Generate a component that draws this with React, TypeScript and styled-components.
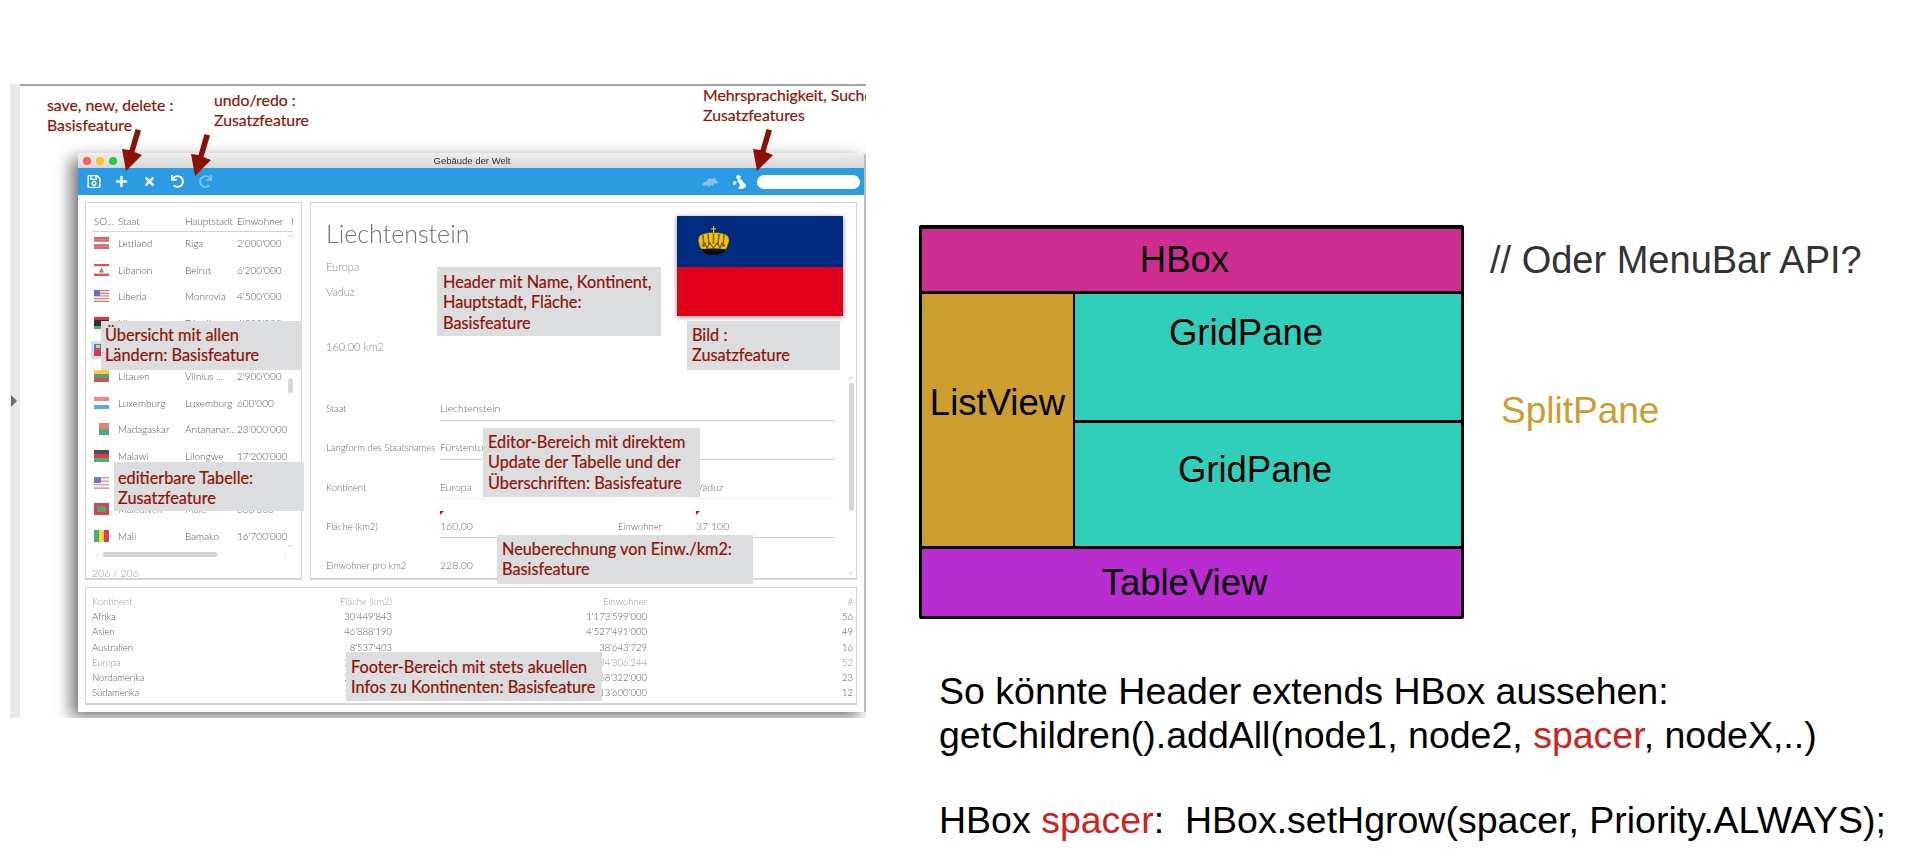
import React from "react";
import styled, { createGlobalStyle } from "styled-components";
import { FaRegSave, FaPlus, FaTimes, FaUndo, FaRedo } from "react-icons/fa";

const Global = createGlobalStyle`
  html, body { margin: 0; padding: 0; background: #fff; overflow: hidden; }
  #root { width: 1920px; height: 864px; }
`;

const Page = styled.div`
  width: 1920px;
  height: 864px;
  display: flex;
  align-items: flex-start;
  background: #fff;
  font-family: "Liberation Sans", Arial, sans-serif;
`;

/* ---------- left: annotated screenshot ---------- */
const Shot = styled.section`
  position: relative;
  display: flex;
  width: 856px;
  height: 634px;
  margin: 84px 0 0 10px;
  overflow: hidden;
  flex: none;
`;
const Strip = styled.div`
  width: 10px;
  flex: none;
  background: #e8e8e8;
  display: flex;
  align-items: center;
  padding-left: 1px;
  box-sizing: border-box;
  z-index: 1;
`;
const Handle = styled.i`
  display: block;
  width: 0;
  height: 0;
  border-left: 6px solid #6c6c6c;
  border-top: 6px solid transparent;
  border-bottom: 6px solid transparent;
`;
const Stage = styled.div`
  flex: 1;
  border-top: 2px solid #a4a4a4;
  padding: 67px 0 0 58px;
  min-width: 0;
`;
const Win = styled.div`
  width: 788px;
  height: 559px;
  box-sizing: border-box;
  border-right: 2px solid #bdbdbd;
  border-radius: 4px 4px 0 0;
  background: #fff;
  box-shadow: -7px 5px 16px rgba(0, 0, 0, 0.55);
  display: flex;
  flex-direction: column;
  font-family: Lato, "Liberation Sans", sans-serif;
  font-weight: 300;
  color: #555;
  filter: blur(0.45px);
`;
const TitleBar = styled.div`
  height: 15px;
  flex: none;
  display: flex;
  align-items: center;
  padding-left: 5px;
  background: linear-gradient(#efefef, #d6d6d6);
  border-radius: 4px 4px 0 0;
`;
const Light = styled.i<{ $c: string }>`
  width: 8px;
  height: 8px;
  border-radius: 50%;
  margin-right: 5px;
  background: ${(p) => p.$c};
`;
const WinTitle = styled.span`
  flex: 1;
  text-align: center;
  font: 400 9.5px "Liberation Sans", sans-serif;
  color: #333;
  padding-right: 42px;
`;
const Toolbar = styled.div`
  height: 27px;
  flex: none;
  background: #2b9ce3;
  display: flex;
  align-items: center;
  padding: 0 4px 0 8.5px;
  color: #fff;
`;
const ToolIcon = styled.span<{ $w: number; $dim?: boolean; $size?: number }>`
  display: flex;
  justify-content: center;
  width: ${(p) => p.$w}px;
  font-size: ${(p) => p.$size ?? 13}px;
  opacity: ${(p) => (p.$dim ? 0.4 : 1)};
`;
const Spacer = styled.div`
  flex: 1;
`;
const Country = styled.svg<{ $dim?: boolean; $gap: number }>`
  opacity: ${(p) => (p.$dim ? 0.4 : 1)};
  margin-right: ${(p) => p.$gap}px;
`;
const Search = styled.div`
  width: 103px;
  height: 14px;
  border-radius: 7px;
  background: #fff;
`;
const Panes = styled.div`
  display: flex;
  gap: 8px;
  padding: 7px 7px 0;
  height: 392px;
  box-sizing: border-box;
  flex: none;
`;
const Panel = styled.div`
  box-sizing: border-box;
  background: #fff;
  border: 1px solid #d4d4d4;
  border-bottom-width: 2px;
  position: relative;
`;
const ListPanel = styled(Panel)`
  width: 217px;
  height: 378px;
  padding: 11px 8px 0 6px;
  font-size: 10px;
`;
const ListHead = styled.div`
  display: grid;
  grid-template-columns: 24px 67px 52px 1fr;
  height: 17px;
  border-bottom: 1px solid #d4d4d4;
  padding-left: 2px;
  line-height: 15px;
  white-space: nowrap;
  overflow: hidden;
`;
const ListBody = styled.div`
  margin-top: -2px;
`;
const ListRow = styled.div`
  display: grid;
  grid-template-columns: 24px 67px 52px 1fr;
  height: 26.6px;
  align-items: center;
  padding-left: 2px;
  white-space: nowrap;
`;
const FlagCell = styled.div<{ $sel?: boolean }>`
  width: 15px;
  height: 12px;
  display: flex;
  box-shadow: ${(p) => (p.$sel ? "0 0 0 3px #bfdcf2" : "none")};
  background: ${(p) => (p.$sel ? "#bfdcf2" : "transparent")};
  opacity: 0.8;
`;
const HScroll = styled.div`
  display: flex;
  align-items: center;
  height: 10px;
  margin: 0 6px 0 4px;
  color: #bbb;
  font-size: 9px;
`;
const HThumb = styled.i`
  display: block;
  width: 114px;
  height: 5px;
  border-radius: 3px;
  background: #d2d2d2;
  margin-left: 5px;
`;
const Counter = styled.div`
  margin-top: 8px;
  font-size: 10.5px;
  color: #999;
`;
const VThumb = styled.i<{ $t: number; $h: number; $r: number }>`
  position: absolute;
  top: ${(p) => p.$t}px;
  right: ${(p) => p.$r}px;
  width: 5px;
  height: ${(p) => p.$h}px;
  border-radius: 3px;
  background: #d6d6d6;
`;
const Chevron = styled.svg<{ $t: number; $r: number }>`
  position: absolute;
  top: ${(p) => p.$t}px;
  right: ${(p) => p.$r}px;
`;
const DetailPanel = styled(Panel)`
  width: 547px;
  height: 378px;
  padding: 0 21px 0 15px;
  overflow: hidden;
`;
const Head = styled.div`
  display: flex;
  justify-content: space-between;
  height: 186px;
  box-sizing: border-box;
  padding-top: 13px;
`;
const HeadText = styled.div`
  padding-top: 5px;
  font-size: 11px;
  color: #8a8a8a;
`;
const BigTitle = styled.h1`
  margin: 0 0 8px;
  font-size: 25px;
  line-height: 25px;
  font-weight: 300;
  color: #6f6f78;
`;
const SubLine = styled.div<{ $gap?: number }>`
  line-height: 25px;
  margin-top: ${(p) => p.$gap ?? 0}px;
`;
const FlagBox = styled.svg`
  display: block;
  box-shadow: 0 1px 5px rgba(0, 0, 0, 0.45);
  margin-right: -8px;
`;
const FormRow = styled.div`
  display: grid;
  grid-template-columns: 114px 178px 78px 1fr;
  align-items: center;
  height: 39.25px;
  font-size: 9.5px;
  color: #666;
  white-space: nowrap;
`;
const Field = styled.div<{ $span?: number; $soft?: boolean; $bare?: boolean }>`
  grid-column: span ${(p) => p.$span ?? 1};
  height: 23px;
  display: flex;
  align-items: center;
  border-bottom: 1px solid ${(p) => (p.$bare ? "transparent" : p.$soft ? "#f2f2f2" : "#cfcfcf")};
  position: relative;
  font-size: 10.5px;
`;
const Invalid = styled.i`
  position: absolute;
  top: -3px;
  left: 0;
  width: 0;
  height: 0;
  border-top: 4px solid #e8001c;
  border-right: 4px solid transparent;
`;
const EndLine = styled.div`
  height: 1px;
  margin: -1px 0 0 114px;
  background: #cfcfcf;
`;
const FooterPanel = styled(Panel)`
  margin: 0 7px;
  height: 118px;
  flex: none;
  border-width: 1px 1px 2px;
  padding: 6px 3px 0 6px;
  font-size: 9.5px;
  color: #555;
`;
const FootRow = styled.div<{ $muted?: boolean; $tint?: boolean }>`
  display: grid;
  grid-template-columns: 100px 200px 255px 1fr;
  height: 15.2px;
  line-height: 15.2px;
  white-space: nowrap;
  color: ${(p) => (p.$muted ? "#999" : p.$tint ? "#8890a8" : "inherit")};
`;
const FootNum = styled.div`
  text-align: right;
`;
const Note = styled.div<{ $x: number; $y: number; $w: number; $h: number; $pad?: number; $top?: number }>`
  position: absolute;
  z-index: 2;
  left: ${(p) => p.$x - 10}px;
  top: ${(p) => p.$y - 84}px;
  width: ${(p) => p.$w}px;
  height: ${(p) => p.$h}px;
  box-sizing: border-box;
  padding: ${(p) => p.$top ?? 4}px 0 0 ${(p) => p.$pad ?? 5}px;
  background: #dcddde;
  color: #8d1208;
  font: 400 16.3px/20.4px Lato, "Liberation Sans", sans-serif;
  -webkit-text-stroke: 0.2px #8d1208;
  white-space: pre;
  overflow: hidden;
`;
const Caption = styled.div<{ $x: number; $y: number }>`
  position: absolute;
  z-index: 2;
  left: ${(p) => p.$x - 10}px;
  top: ${(p) => p.$y - 84}px;
  color: #8d1208;
  font: 400 15.8px/20px Lato, "Liberation Sans", sans-serif;
  -webkit-text-stroke: 0.2px #8d1208;
  white-space: pre;
`;
const ArrowBox = styled.svg<{ $x: number; $y: number }>`
  position: absolute;
  z-index: 2;
  left: ${(p) => p.$x - 10}px;
  top: ${(p) => p.$y - 84}px;
`;

/* ---------- right: the diagram and text ---------- */
const Side = styled.section`
  flex: none;
  margin-left: 53px;
  padding-top: 225px;
`;
const Top = styled.div`
  display: flex;
  align-items: flex-start;
`;
const Diagram = styled.div`
  width: 545px;
  height: 394px;
  box-sizing: border-box;
  border: 3px solid #000;
  border-top-width: 4px;
  background: #000;
  display: grid;
  grid-template-columns: 151px 1fr;
  grid-template-rows: 62px 126px 123px 1fr;
  gap: 3px 2px;
  border-radius: 2px;
`;
const Cell = styled.div<{ $bg: string; $col?: string; $row?: string; $shift?: number; $top?: number }>`
  background: ${(p) => p.$bg};
  grid-column: ${(p) => p.$col ?? "auto"};
  grid-row: ${(p) => p.$row ?? "auto"};
  display: flex;
  justify-content: center;
  align-items: ${(p) => (p.$top !== undefined ? "flex-start" : "center")};
  padding-top: ${(p) => p.$top ?? 0}px;
  padding-right: ${(p) => p.$shift ?? 0}px;
  font-size: 36.5px;
  line-height: 42px;
  color: #000;
  white-space: nowrap;
`;
const Labels = styled.div`
  margin-left: 26px;
  padding-top: 14px;
  display: flex;
  flex-direction: column;
  font-size: 38px;
  line-height: 42px;
  white-space: nowrap;
`;
const MenuHint = styled.div`
  color: #333;
`;
const SplitHint = styled.div`
  color: #cc9e2e;
  margin: 109px 0 0 11px;
  font-size: 37px;
`;
const Code = styled.div`
  margin: 50px 0 0 20px;
  font-size: 37.5px;
  line-height: 44px;
  color: #000;
  white-space: nowrap;
`;
const CodeGap = styled.div`
  height: 41px;
`;
const Red = styled.span`
  color: #d0211c;
`;

type FlagSpec = { stripes: string[]; extra?: React.ReactNode };
const flags: Record<string, FlagSpec> = {
  lv: { stripes: ["#c8444f", "#c8444f", "#fff", "#c8444f", "#c8444f"] },
  lb: { stripes: ["#ed1c24", "#fff", "#fff", "#fff", "#ed1c24"], extra: <path d="M7.5 3.5 10 8.5H5z" fill="#2a8a3a" /> },
  lr: {
    stripes: ["#d9505a", "#fff", "#d9505a", "#fff", "#d9505a", "#fff", "#d9505a", "#fff", "#d9505a"],
    extra: <rect width="6" height="6" fill="#3a4fa0" />,
  },
  ly: { stripes: ["#e70013", "#000", "#000", "#239e46"] },
  li: { stripes: ["#3a4f9a", "#e0001a"], extra: <rect x="2" y="1" width="4" height="3" fill="#e3c23a" /> },
  lt: { stripes: ["#f4c21d", "#2a8a4a", "#c1272d"] },
  lu: { stripes: ["#ef6a70", "#fff", "#2d9ad2"] },
  mg: { stripes: ["#e85a5a", "#1f9a58"], extra: <rect width="5" height="12" fill="#fff" /> },
  mw: { stripes: ["#222", "#ce1126", "#2a9a4a"] },
  my: {
    stripes: ["#e8808a", "#fff", "#e8808a", "#fff", "#e8808a", "#fff", "#e8808a"],
    extra: <rect width="7" height="6" fill="#4a5ea8" />,
  },
  mv: { stripes: ["#d21034"], extra: <rect x="3" y="3" width="9" height="6" fill="#2a8a4a" /> },
  ml: {
    stripes: ["#1ea04a"],
    extra: (
      <>
        <rect x="5" width="5" height="12" fill="#f6d21d" />
        <rect x="10" width="5" height="12" fill="#d21034" />
      </>
    ),
  },
};

const MiniFlag = ({ code }: { code: string }) => {
  const f = flags[code];
  const h = 12 / f.stripes.length;
  return (
    <svg width="15" height="12" viewBox="0 0 15 12">
      {f.stripes.map((c, i) => (
        <rect key={i} y={i * h} width="15" height={h + 0.1} fill={c} />
      ))}
      {f.extra}
    </svg>
  );
};

const rows = [
  ["lv", "Lettland", "Riga", "2'000'000"],
  ["lb", "Libanon", "Beirut", "6'200'000"],
  ["lr", "Liberia", "Monrovia", "4'500'000"],
  ["ly", "Libyen", "Tripolis", "6'300'000"],
  ["li", "Liechtenstein", "Vaduz", "37'100"],
  ["lt", "Litauen", "Vilnius ...", "2'900'000"],
  ["lu", "Luxemburg", "Luxemburg", "600'000"],
  ["mg", "Madagaskar", "Antananar...", "23'000'000"],
  ["mw", "Malawi", "Lilongwe", "17'200'000"],
  ["my", "Malaysia", "Kuala Lu...", "30'800'000"],
  ["mv", "Malediven", "Malé", "300'000"],
  ["ml", "Mali", "Bamako", "16'700'000"],
];

const foot = [
  ["Afrika", "30'449'843", "1'173'599'000", "56"],
  ["Asien", "46'888'190", "4'527'491'000", "49"],
  ["Australien", "8'537'403", "38'643'729", "16"],
  ["Europa", "23'049'133", "734'306'244", "52"],
  ["Nordamerika", "24'709'000", "568'322'000", "23"],
  ["Südamerika", "17'840'000", "413'600'000", "12"],
];

const Arrow = ({ x, y }: { x: number; y: number }) => (
  <ArrowBox $x={x} $y={y} width="24" height="44" viewBox="0 0 24 44">
    <polygon points="15.5,1 21,2.5 14.5,24 22,27 6,43 2,21 9.5,22" fill="#8b1204" />
  </ArrowBox>
);

const Crown = () => (
  <g>
    <path d="M36 10h1.2v2.2h1.8v1.2h-1.8V17h-1.2v-3.6h-1.8v-1.2H36z" fill="#e8bd00" />
    <path d="M21.5 25 Q21 19 27 18 Q33 16 36.5 17 Q41 16 46 18 Q52.5 19 52 25 L50 31 L49 33 H24.5 L23 31Z" fill="#f2c500" stroke="#8a6f00" strokeWidth="0.5" />
    <path d="M26 19 L27 31 M31 18 L32 29 M36.5 18 V28 M42 18 L41 29 M47 19 L46 31" stroke="#7a6200" strokeWidth="1.6" fill="none" />
    <path d="M25 30 L28 27 L30 32 L33 27 L36.5 32 L40 27 L43 32 L45 27 L48 30" stroke="#6a5600" strokeWidth="1.1" fill="none" />
    <path d="M25 33.5 Q36.5 31.5 48 33.5 Q46 39 36.5 39 Q27 39 25 33.5Z" fill="#0b0b0b" />
  </g>
);

const ChevronUp = ({ t, r }: { t: number; r: number }) => (
  <Chevron $t={t} $r={r} width="6" height="4" viewBox="0 0 6 4">
    <path d="M0.5 3.5 3 1 5.5 3.5" fill="none" stroke="#c4c4c4" strokeWidth="0.8" />
  </Chevron>
);
const ChevronDown = ({ t, r }: { t: number; r: number }) => (
  <Chevron $t={t} $r={r} width="6" height="4" viewBox="0 0 6 4">
    <path d="M0.5 0.5 3 3 5.5 0.5" fill="none" stroke="#c4c4c4" strokeWidth="0.8" />
  </Chevron>
);

export default function App() {
  return (
    <Page>
      <Global />
      <Shot>
        <Strip>
          <Handle />
        </Strip>
        <Stage>
          <Win>
            <TitleBar>
              <Light $c="#fc5b57" />
              <Light $c="#fdbb2e" />
              <Light $c="#2cc840" />
              <WinTitle>Gebäude der Welt</WinTitle>
            </TitleBar>
            <Toolbar>
              <ToolIcon $w={14} $size={15}><FaRegSave /></ToolIcon>
              <ToolIcon $w={42}><FaPlus /></ToolIcon>
              <ToolIcon $w={14}><FaTimes /></ToolIcon>
              <ToolIcon $w={42}><FaUndo /></ToolIcon>
              <ToolIcon $w={14} $dim><FaRedo /></ToolIcon>
              <Spacer />
              <Country $dim $gap={15} width="16" height="10" viewBox="0 0 16 10">
                <path d="M0 8 2 5 4 5 6 2 8 1 10 2 13 1 14 3 16 5 14 7 12 6 11 9 9 8 7 10 5 8 3 9Z" fill="#fff" />
              </Country>
              <Country $gap={10} width="14" height="14" viewBox="0 0 14 14">
                <path d="M4 0 8 1 7 4 9 5 11 8 13 10 13 12 9 14 6 14 5 13 7 11 6 8 4 6 5 4 3 3Z M0 7 2 6 3.5 7.5 3 9 1 10 0 9Z" fill="#fff" />
              </Country>
              <Search />
            </Toolbar>
            <Panes>
              <ListPanel>
                <ListHead>
                  <span>SO...</span>
                  <span>Staat</span>
                  <span>Hauptstadt</span>
                  <span>Einwohner &nbsp; F</span>
                </ListHead>
                <ListBody>
                  {rows.map((r) => (
                    <ListRow key={r[0]}>
                      <FlagCell $sel={r[0] === "li"}>
                        <MiniFlag code={r[0]} />
                      </FlagCell>
                      <span>{r[1]}</span>
                      <span>{r[2]}</span>
                      <span>{r[3]}</span>
                    </ListRow>
                  ))}
                </ListBody>
                <HScroll>
                  ‹<HThumb />
                  <Spacer />›
                </HScroll>
                <Counter>206 / 206</Counter>
                <VThumb $t={175} $h={15} $r={8} />
                <ChevronUp t={31} r={8} />
                <ChevronDown t={341} r={8} />
              </ListPanel>
              <DetailPanel>
                <Head>
                  <HeadText>
                    <BigTitle>Liechtenstein</BigTitle>
                    <SubLine>Europa</SubLine>
                    <SubLine>Vaduz</SubLine>
                    <SubLine $gap={30}>160.00 km2</SubLine>
                  </HeadText>
                  <FlagBox width="166" height="100" viewBox="0 0 166 100">
                    <rect width="166" height="51" fill="#002b7f" />
                    <rect y="51" width="166" height="49" fill="#e0001a" />
                    <Crown />
                  </FlagBox>
                </Head>
                <FormRow>
                  <span>Staat</span>
                  <Field $span={3}>Liechtenstein</Field>
                </FormRow>
                <FormRow>
                  <span>Langform des Staatsnames</span>
                  <Field $span={3}>Fürstentum Liechtenstein</Field>
                </FormRow>
                <FormRow>
                  <span>Kontinent</span>
                  <Field $soft>Europa</Field>
                  <span>Hauptstadt</span>
                  <Field $soft>Vaduz</Field>
                </FormRow>
                <FormRow>
                  <span>Fläche (km2)</span>
                  <Field><Invalid />160.00</Field>
                  <span>Einwohner</span>
                  <Field><Invalid />37 100</Field>
                </FormRow>
                <FormRow>
                  <span>Einwohner pro km2</span>
                  <Field $bare $span={3}>228.00</Field>
                </FormRow>
                <EndLine />
                <VThumb $t={180} $h={128} $r={2} />
                <ChevronUp t={173} r={2} />
                <ChevronDown t={368} r={2} />
              </DetailPanel>
            </Panes>
            <FooterPanel>
              <FootRow $muted>
                <span>Kontinent</span>
                <FootNum>Fläche (km2)</FootNum>
                <FootNum>Einwohner</FootNum>
                <FootNum>#</FootNum>
              </FootRow>
              {foot.map((f) => (
                <FootRow key={f[0]} $tint={f[0] === "Europa"}>
                  <span>{f[0]}</span>
                  <FootNum>{f[1]}</FootNum>
                  <FootNum>{f[2]}</FootNum>
                  <FootNum>{f[3]}</FootNum>
                </FootRow>
              ))}
            </FooterPanel>
          </Win>
        </Stage>

        <Caption $x={47} $y={95}>{"save, new, delete :\nBasisfeature"}</Caption>
        <Caption $x={214} $y={90}>{"undo/redo :\nZusatzfeature"}</Caption>
        <Caption $x={703} $y={85}>{"Mehrsprachigkeit, Suche:\nZusatzfeatures"}</Caption>
        <Arrow x={120} y={128} />
        <Arrow x={189} y={133} />
        <Arrow x={751} y={128} />

        <Note $x={101} $y={321} $w={201} $h={49} $pad={4}>{"Übersicht mit allen\nLändern: Basisfeature"}</Note>
        <Note $x={114} $y={462} $w={190} $h={49} $pad={4} $top={6}>{"editierbare Tabelle:\nZusatzfeature"}</Note>
        <Note $x={437} $y={267} $w={224} $h={69} $pad={6} $top={5}>{"Header mit Name, Kontinent,\nHauptstadt, Fläche:\nBasisfeature"}</Note>
        <Note $x={687} $y={321} $w={153} $h={49}>{"Bild :\nZusatzfeature"}</Note>
        <Note $x={483} $y={428} $w={217} $h={69}>{"Editor-Bereich mit direktem\nUpdate der Tabelle und der\nÜberschriften: Basisfeature"}</Note>
        <Note $x={497} $y={535} $w={256} $h={49}>{"Neuberechnung von Einw./km2:\nBasisfeature"}</Note>
        <Note $x={346} $y={652} $w={256} $h={49} $top={5}>{"Footer-Bereich mit stets akuellen\nInfos zu Kontinenten: Basisfeature"}</Note>
      </Shot>

      <Side>
        <Top>
          <Diagram>
            <Cell $bg="#cf2e90" $col="1 / -1" $shift={14}>HBox</Cell>
            <Cell $bg="#cc9e2e" $row="2 / 4" $top={88}>ListView</Cell>
            <Cell $bg="#30cfbc" $top={18} $shift={44}>GridPane</Cell>
            <Cell $bg="#30cfbc" $top={26} $shift={26}>GridPane</Cell>
            <Cell $bg="#b92ccf" $col="1 / -1" $shift={14}>TableView</Cell>
          </Diagram>
          <Labels>
            <MenuHint>// Oder MenuBar API?</MenuHint>
            <SplitHint>SplitPane</SplitHint>
          </Labels>
        </Top>
        <Code>
          So könnte Header extends HBox aussehen:
          <br />
          getChildren().addAll(node1, node2, <Red>spacer</Red>, nodeX,..)
          <CodeGap />
          HBox <Red>spacer</Red>:&nbsp; HBox.setHgrow(spacer, Priority.ALWAYS);
        </Code>
      </Side>
    </Page>
  );
}
